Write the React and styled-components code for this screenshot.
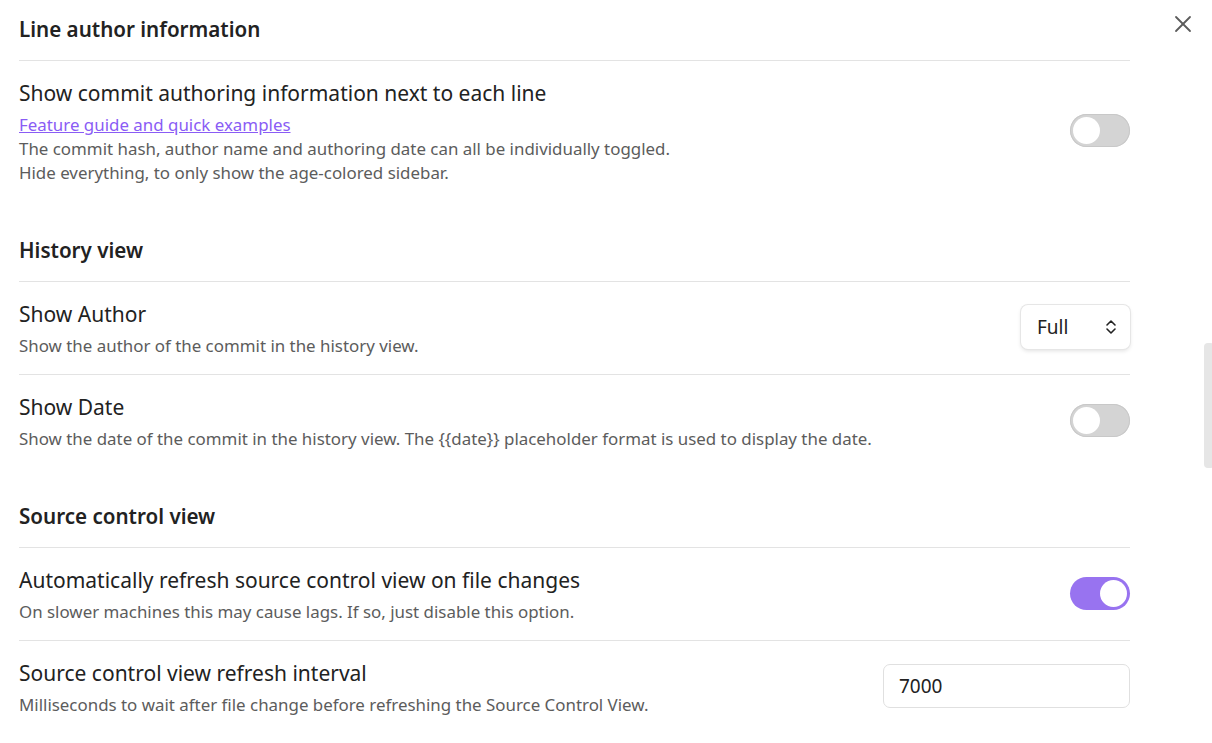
import React from "react";
import styled, { createGlobalStyle, css } from "styled-components";

const GlobalStyle = createGlobalStyle`
    html, body {
        margin: 0;
        padding: 0;
        background: #ffffff;
    }
    body {
        font-family: "Noto Sans", "Open Sans", sans-serif;
        color: #222222;
        overflow: hidden;
    }
`;

const Modal = styled.div`
    position: relative;
    width: 1212px;
    height: 743px;
    overflow: hidden;
    background: #ffffff;
`;

const Content = styled.div`
    width: 1111px;
    padding: 15px 0 0 19px;
    display: flex;
    flex-direction: column;
`;

const Heading = styled.div`
    font-size: 20.6px;
    font-weight: 600;
    line-height: 28px;
    color: #222222;
    padding-bottom: 17px;
    ${(p) =>
        !p.first &&
        css`
            margin-top: 35px;
        `}
`;

const Row = styled.div`
    display: flex;
    align-items: center;
    justify-content: space-between;
    border-top: 1px solid #e3e3e3;
    padding: 18px 0 16px;
`;

const Info = styled.div`
    display: flex;
    flex-direction: column;
    gap: 6px;
`;

const Name = styled.div`
    font-size: 21px;
    line-height: 28px;
    color: #222222;
`;

const Description = styled.div`
    font-size: 16.9px;
    line-height: 24px;
    color: #5c5c5c;

    a {
        color: #8a5cf5;
        text-decoration: underline;
    }
`;

const Control = styled.div`
    flex-shrink: 0;
    margin-bottom: 4px;
`;

const Toggle = styled.div`
    position: relative;
    width: 60px;
    height: 33px;
    border-radius: 17px;
    background: ${(p) => (p.on ? "#9873f0" : "#d4d4d4")};
    box-shadow: ${(p) => (p.on ? "none" : "inset 0 0 0 1px #c8c8c8")};

    &::after {
        content: "";
        position: absolute;
        top: 3px;
        left: ${(p) => (p.on ? "30px" : "3px")};
        width: 27px;
        height: 27px;
        border-radius: 50%;
        background: #ffffff;
    }
`;

const Dropdown = styled.div`
    display: flex;
    align-items: center;
    justify-content: space-between;
    box-sizing: border-box;
    width: 109px;
    height: 44px;
    padding: 0 13px 0 16px;
    border-radius: 7px;
    background: #ffffff;
    box-shadow: 0 0 0 1px #e6e6e6, 0 2px 4px rgba(0, 0, 0, 0.12);
    font-size: 19px;
    color: #222222;
`;

const TextInput = styled.div`
    box-sizing: border-box;
    width: 247px;
    height: 44px;
    padding: 0 15px;
    display: flex;
    align-items: center;
    border: 1px solid #e0e0e0;
    border-radius: 7px;
    font-size: 19px;
    color: #222222;
`;

const CloseButton = styled.div`
    position: absolute;
    top: 14px;
    left: 1173px;
    width: 20px;
    height: 20px;
    color: #5c5c5c;
`;

const ScrollThumb = styled.div`
    position: absolute;
    top: 343px;
    left: 1204px;
    width: 10px;
    height: 125px;
    border-radius: 4px;
    background: #e6e6e6;
`;

const Chevrons = () => (
    <svg width="12" height="16" viewBox="0 0 12 16" fill="none" stroke="#222" strokeWidth="1.6" strokeLinecap="round" strokeLinejoin="round">
        <path d="M2 6 L6 2 L10 6" />
        <path d="M2 10 L6 14 L10 10" />
    </svg>
);

const CloseIcon = () => (
    <svg width="20" height="20" viewBox="0 0 20 20" fill="none" stroke="currentColor" strokeWidth="1.8" strokeLinecap="round">
        <path d="M3 3 L17 17" />
        <path d="M17 3 L3 17" />
    </svg>
);

const App = () => (
    <Modal>
        <GlobalStyle />
        <CloseButton>
            <CloseIcon />
        </CloseButton>
        <ScrollThumb />
        <Content>
            <Heading first>Line author information</Heading>
            <Row>
                <Info>
                    <Name>Show commit authoring information next to each line</Name>
                    <Description>
                        <a href="#guide">Feature guide and quick examples</a>
                        <br />
                        The commit hash, author name and authoring date can all be individually toggled.
                        <br />
                        Hide everything, to only show the age-colored sidebar.
                    </Description>
                </Info>
                <Control>
                    <Toggle />
                </Control>
            </Row>

            <Heading>History view</Heading>
            <Row>
                <Info>
                    <Name>Show Author</Name>
                    <Description>Show the author of the commit in the history view.</Description>
                </Info>
                <Control>
                    <Dropdown>
                        Full
                        <Chevrons />
                    </Dropdown>
                </Control>
            </Row>
            <Row>
                <Info>
                    <Name>Show Date</Name>
                    <Description>
                        Show the date of the commit in the history view. The {"{{date}}"} placeholder format is used to display the date.
                    </Description>
                </Info>
                <Control>
                    <Toggle />
                </Control>
            </Row>

            <Heading>Source control view</Heading>
            <Row>
                <Info>
                    <Name>Automatically refresh source control view on file changes</Name>
                    <Description>On slower machines this may cause lags. If so, just disable this option.</Description>
                </Info>
                <Control>
                    <Toggle on />
                </Control>
            </Row>
            <Row>
                <Info>
                    <Name>Source control view refresh interval</Name>
                    <Description>Milliseconds to wait after file change before refreshing the Source Control View.</Description>
                </Info>
                <Control>
                    <TextInput>7000</TextInput>
                </Control>
            </Row>
        </Content>
    </Modal>
);

export default App;
